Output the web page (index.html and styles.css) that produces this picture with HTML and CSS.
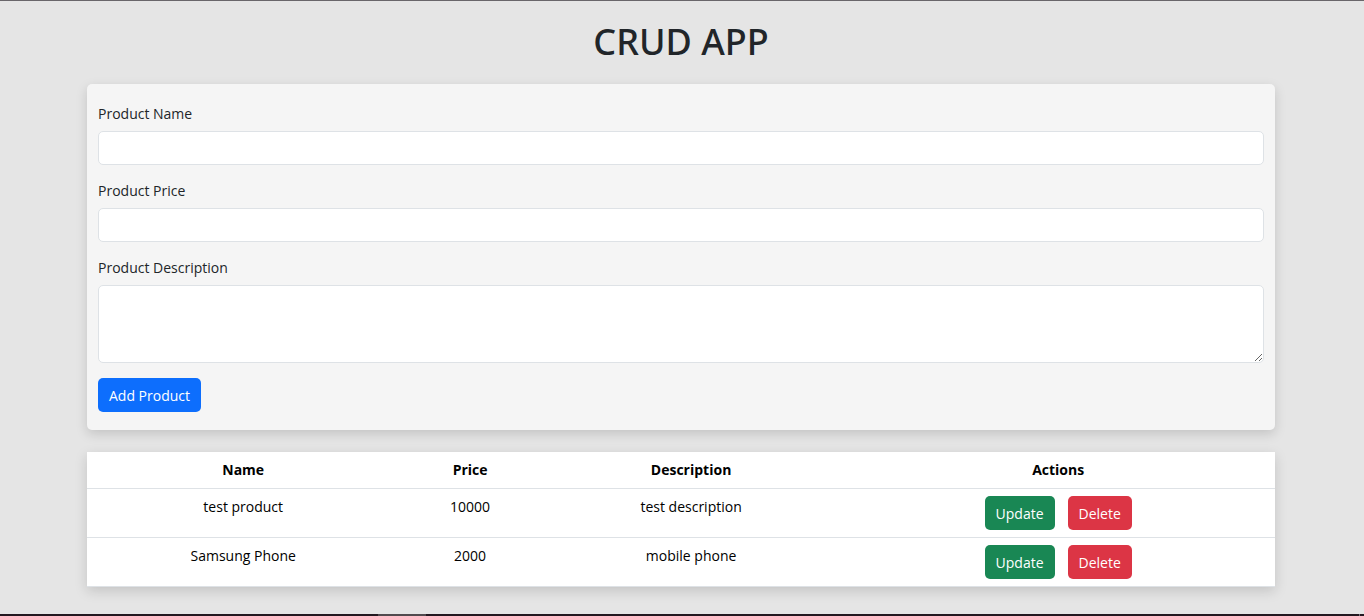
FILE: index.html
```html
<!DOCTYPE html>
<html lang="en">
<head>
<meta charset="utf-8">
<meta name="viewport" content="width=device-width, initial-scale=1">
<title>CRUD APP</title>
<link rel="stylesheet" href="styles.css">
</head>
<body>
<main class="page">
  <div class="container">
    <h1 class="title">CRUD APP</h1>
    <form class="card">
      <div class="field">
        <label for="name">Product Name</label>
        <input class="control" id="name" type="text">
      </div>
      <div class="field">
        <label for="price">Product Price</label>
        <input class="control" id="price" type="text">
      </div>
      <div class="field">
        <label for="description">Product Description</label>
        <textarea class="control control-area" id="description"></textarea>
      </div>
      <button class="btn btn-primary" type="button">Add Product</button>
    </form>
    <table class="table">
      <colgroup>
        <col class="col-name">
        <col class="col-price">
        <col class="col-description">
        <col class="col-actions">
      </colgroup>
      <thead>
        <tr><th scope="col">Name</th><th scope="col">Price</th><th scope="col">Description</th><th scope="col">Actions</th></tr>
      </thead>
      <tbody>
        <tr>
          <td>test product</td>
          <td>10000</td>
          <td>test description</td>
          <td><div class="actions"><button class="btn btn-success" type="button">Update</button><button class="btn btn-danger" type="button">Delete</button></div></td>
        </tr>
        <tr>
          <td>Samsung Phone</td>
          <td>2000</td>
          <td>mobile phone</td>
          <td><div class="actions"><button class="btn btn-success" type="button">Update</button><button class="btn btn-danger" type="button">Delete</button></div></td>
        </tr>
      </tbody>
    </table>
  </div>
</main>
<div class="edge"><div class="edge-active"></div><div class="edge-end"></div></div>
</body>
</html>
```
FILE: styles.css
```css
* {
  box-sizing: border-box;
}

body {
  margin: 0;
  min-height: 100vh;
  display: flex;
  flex-direction: column;
  border-top: 1px solid #69666a;
  background: #e5e5e5;
  color: #212529;
  font-family: "Segoe UI", "Open Sans", "Noto Sans", sans-serif;
  font-size: 14px;
  line-height: 21px;
}

.page {
  padding-right: 2px;
}

.container {
  max-width: 1188px;
  margin: 0 auto;
}

.title {
  margin: 0;
  padding: 19px 0 21px;
  font-family: "Segoe UI", "Noto Sans", "Open Sans", sans-serif;
  font-size: 36px;
  line-height: 43px;
  font-weight: 500;
  text-align: center;
}

.card {
  display: flex;
  flex-direction: column;
  align-items: flex-start;
  gap: 15px;
  padding: 19px 11px 18px;
  border-radius: 5px;
  background: #f5f5f5;
  box-shadow: 0 4px 12px rgba(0, 0, 0, 0.15);
}

.field {
  display: flex;
  flex-direction: column;
  gap: 7px;
  width: 100%;
}

.control {
  width: 100%;
  height: 34px;
  padding: 5px 11px;
  border: 1px solid #dee2e6;
  border-radius: 5px;
  background: #fff;
  color: inherit;
  font: inherit;
}

.control-area {
  height: 78px;
  resize: vertical;
}

.btn {
  height: 34px;
  padding: 0 11px;
  border: 0;
  border-radius: 5px;
  color: #fff;
  font: inherit;
  cursor: pointer;
}

.btn-primary {
  background: #0d6efd;
}

.btn-success {
  background: #198754;
}

.btn-danger {
  background: #dc3545;
}

.table {
  width: 100%;
  margin: 22px 0;
  table-layout: fixed;
  border-spacing: 0;
  background: #fff;
  color: #000;
  text-align: center;
  box-shadow: 0 4px 12px rgba(0, 0, 0, 0.15);
}

.table th,
.table td {
  padding: 7px;
  border-bottom: 1px solid #dee2e6;
  vertical-align: top;
}

.table th {
  padding-bottom: 8px;
  font-weight: 700;
}

.col-name {
  width: 26.3%;
}

.col-price {
  width: 11.9%;
}

.col-description {
  width: 25.3%;
}

.col-actions {
  width: 36.5%;
}

.actions {
  display: flex;
  justify-content: center;
  gap: 13px;
}

.edge {
  display: flex;
  justify-content: space-between;
  height: 2px;
  margin-top: auto;
  background: #231820;
}

.edge-active {
  width: 48px;
  margin-left: 378px;
  background: #514a4e;
}

.edge-end {
  width: 1px;
  margin-right: 4px;
  background: #77727a;
}
```
